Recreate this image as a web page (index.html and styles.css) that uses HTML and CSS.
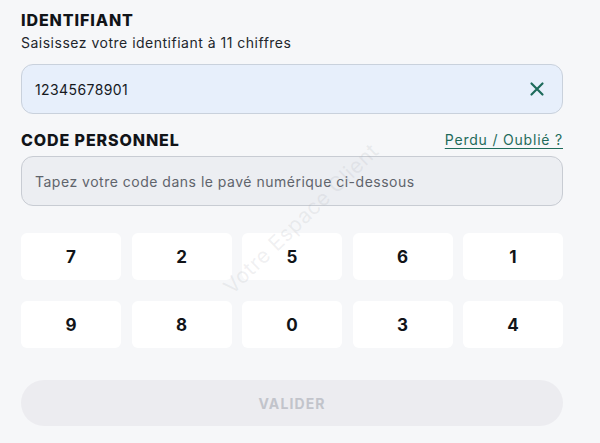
FILE: index.html
```html
<!DOCTYPE html>
<html lang="fr">
<head>
<meta charset="utf-8">
<title>Connexion</title>
<link rel="stylesheet" href="styles.css">
</head>
<body>
<main class="form">
  <h2 class="label">IDENTIFIANT</h2>
  <p class="hint">Saisissez votre identifiant à 11 chiffres</p>
  <div class="field field-id">
    <span class="value">12345678901</span>
    <svg class="clear" width="16" height="16" viewBox="0 0 16 16" aria-hidden="true"><path d="M2.5 2.5 L13.5 13.5 M13.5 2.5 L2.5 13.5" stroke="#1e6b5b" stroke-width="2.2" stroke-linecap="round" fill="none"/></svg>
  </div>
  <div class="code-head">
    <h2 class="label">CODE PERSONNEL</h2>
    <a class="lost" href="#">Perdu / Oublié ?</a>
  </div>
  <div class="field field-code">
    <span class="placeholder">Tapez votre code dans le pavé numérique ci-dessous</span>
  </div>
  <div class="keypad">
    <button class="key">7</button>
    <button class="key">2</button>
    <button class="key">5</button>
    <button class="key">6</button>
    <button class="key">1</button>
    <button class="key">9</button>
    <button class="key">8</button>
    <button class="key">0</button>
    <button class="key">3</button>
    <button class="key">4</button>
  </div>
  <button class="submit" disabled>VALIDER</button>
  <div class="watermark">Votre Espace Client</div>
</main>
</body>
</html>
```
FILE: styles.css
```css
html, body {
  margin: 0;
  padding: 0;
  background: #f6f7f9;
}
body {
  font-family: Inter, "Noto Sans", sans-serif;
  color: #14171c;
  width: 600px;
  height: 443px;
  overflow: hidden;
}
.form {
  position: relative;
  padding: 10px 37px 0 21px;
  display: flex;
  flex-direction: column;
}
.label {
  margin: 0;
  font-size: 16px;
  font-weight: 800;
  letter-spacing: 0.9px;
  line-height: 20px;
  color: #111418;
}
.hint {
  margin: 4px 0 0;
  font-size: 14px;
  letter-spacing: 0.5px;
  line-height: 18px;
  color: #22262c;
}
.field {
  box-sizing: border-box;
  height: 50px;
  border-radius: 12px;
  display: flex;
  align-items: center;
  padding: 0 17px 0 13px;
}
.field-id {
  margin-top: 12px;
  background: #e7effb;
  border: 1px solid #c9d1dc;
  justify-content: space-between;
}
.value {
  font-size: 14px;
  letter-spacing: 0.4px;
  color: #16191e;
}
.code-head {
  margin-top: 15px;
  display: flex;
  justify-content: space-between;
  align-items: center;
  height: 22px;
}
.lost {
  font-size: 14px;
  letter-spacing: 0.8px;
  color: #1e6b5b;
  text-decoration: underline;
  text-underline-offset: 3px;
  text-decoration-thickness: 1px;
  margin-top: -2px;
}
.field-code {
  margin-top: 5px;
  background: #eceef2;
  border: 1px solid #c8ccd3;
}
.placeholder {
  font-size: 14px;
  letter-spacing: 0.5px;
  color: #5f646c;
}
.keypad {
  margin-top: 27px;
  display: grid;
  grid-template-columns: repeat(5, 1fr);
  column-gap: 10.5px;
  row-gap: 21px;
}
.key {
  height: 47px;
  border: none;
  border-radius: 6px;
  background: #ffffff;
  font-family: inherit;
  font-size: 17px;
  font-weight: 700;
  color: #111418;
  padding: 0;
}
.submit {
  margin-top: 32px;
  height: 46px;
  border: none;
  border-radius: 23px;
  background: #ececf0;
  color: #c2c4cb;
  font-family: inherit;
  font-size: 14px;
  font-weight: 700;
  letter-spacing: 1.1px;
}
.watermark {
  position: absolute;
  left: 186px;
  top: 206px;
  width: 230px;
  text-align: center;
  font-size: 21px;
  letter-spacing: 0.6px;
  color: rgba(160, 164, 172, 0.16);
  transform: rotate(-44deg);
  transform-origin: center;
  pointer-events: none;
  white-space: nowrap;
}
```
